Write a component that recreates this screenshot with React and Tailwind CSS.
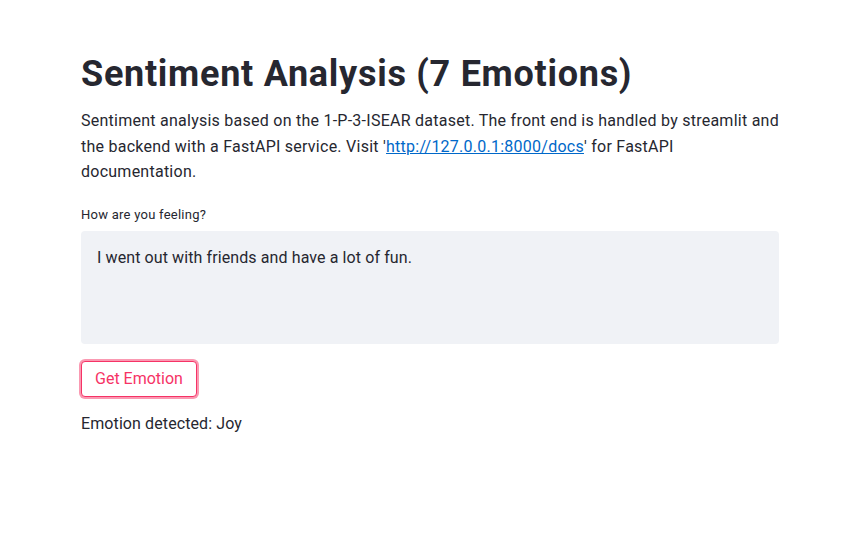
import React from 'react';

const App = () => {
    return (
        <div className="min-h-screen bg-white text-[#262730]" style={{fontFamily: 'Roboto, sans-serif'}}>
            <div className="w-[698px] ml-[81px] pt-[52px]">
                <h1 className="text-[36px] leading-[44px] font-bold tracking-[0.02em] text-[#262730]">
                    Sentiment Analysis (7 Emotions)
                </h1>
                <p className="mt-[12px] text-[16px] leading-[25.6px] tracking-[0.25px]">
                    Sentiment analysis based on the 1-P-3-ISEAR dataset. The front end is handled by streamlit and the backend with a FastAPI service. Visit '
                    <a href="#" className="text-[#0068c9] underline">http://127.0.0.1:8000/docs</a>
                    ' for FastAPI documentation.
                </p>
                <label className="block mt-[22px] text-[13px] leading-[16px] text-[#262730] tracking-[0.25px]">
                    How are you feeling?
                </label>
                <div className="mt-[8px] h-[113px] rounded-[4px] bg-[#f0f2f6] px-4 pt-[15px] text-[16px] leading-[24px] tracking-[0.1px]">
                    I went out with friends and have a lot of fun.
                </div>
                <button className="mt-[17px] h-[36px] px-[13px] rounded-[4px] border border-[#f63366] ring-2 ring-[#f63366]/50 bg-white text-[16px] text-[#f63366]">
                    Get Emotion
                </button>
                <p className="mt-[14px] text-[16px] leading-[25.6px] tracking-[0.1px]">
                    Emotion detected: Joy
                </p>
            </div>
        </div>
    );
};

export default App;
